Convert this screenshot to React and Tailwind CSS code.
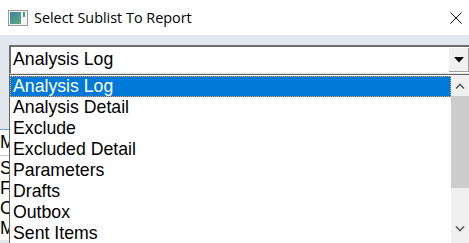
import { useState } from 'react';

const items = [
  'Analysis Log',
  'Analysis Detail',
  'Exclude',
  'Excluded Detail',
  'Parameters',
  'Drafts',
  'Outbox',
  'Sent Items',
];

// window content peeking out left of the open list
const hidden = ['S', 'F', 'C', 'M'];

function WindowIcon() {
  return (
    <svg width="20" height="16" viewBox="0 0 20 16" className="shrink-0">
      <rect x="0.5" y="0.5" width="19" height="15" fill="#f4f4f4" stroke="#9a9a9a" />
      <defs>
        <linearGradient id="pane" x1="0" y1="0" x2="1" y2="1">
          <stop offset="0" stopColor="#3f7fa6" />
          <stop offset="1" stopColor="#5fae7a" />
        </linearGradient>
      </defs>
      <rect x="2" y="2" width="11" height="12" fill="url(#pane)" />
      <rect x="15" y="2" width="2" height="5" fill="#4a9a6a" />
    </svg>
  );
}

export default function App() {
  const [selected] = useState(0);

  return (
    <div
      className="relative w-[469px] h-[243px] overflow-hidden bg-[#e3e8ef]"
      style={{ fontFamily: '"Liberation Sans", Arial, sans-serif' }}
    >
      {/* Title bar */}
      <div className="h-[35px] bg-white flex items-center pl-[8px] pr-[3px]">
        <WindowIcon />
        <span
          className="ml-[6px] text-[14.4px] text-black flex-1"
          style={{ fontFamily: '"Open Sans", "Noto Sans", sans-serif' }}
        >
          Select Sublist To Report
        </span>
        <svg width="12" height="12" viewBox="0 0 12 12" className="mr-[4px]">
          <path d="M0.5 0.5 L11.5 11.5 M11.5 0.5 L0.5 11.5" stroke="#111" strokeWidth="1" />
        </svg>
      </div>

      {/* Combo box */}
      <div className="pt-[10px] pl-[9px]">
        <div className="h-[29px] flex border-t-2 border-l-2 border-t-[#6d6d6d] border-l-[#6d6d6d] border-b border-b-[#e3e3e3] bg-white">
          <div className="flex-1 flex items-center pl-[2px] text-[17.7px] text-black leading-none">
            Analysis Log
          </div>
          <div className="w-[20px] mt-[1px] mb-[1px] flex items-center justify-center bg-[#f0f0f0] border-r border-b border-[#a0a0a0]">
            <svg width="10" height="6" viewBox="0 0 10 6">
              <path d="M0 0 H10 L5 5.5 Z" fill="#000" />
            </svg>
          </div>
        </div>
      </div>

      {/* Window content behind the open list */}
      <div className="h-[55px]" />
      <div className="w-[9px] overflow-hidden border-t border-[#6aa0d8] bg-white">
        <div className="h-[26px] flex items-center text-[17.7px] text-black leading-none border-b border-[#c8c8c8]">
          <span>M</span>
        </div>
        <div className="flex flex-col text-[17.7px] text-black leading-none pt-[4px]">
          {hidden.map((c, i) => (
            <span key={i} className="h-[20px]">{c}</span>
          ))}
        </div>
      </div>

      {/* Dropdown list overlay */}
      <div className="absolute left-[9px] top-[74px] w-[460px] h-[180px] bg-white border-l border-t border-[#646464] flex">
        <div className="flex-1 flex flex-col pt-[1px]">
          {items.map((item, i) => (
            <div
              key={item}
              className={
                i === selected
                  ? 'h-[21px] flex items-center pl-[2px] text-[17.7px] leading-none text-white bg-[#0078d7] border border-dotted border-[#f0a050]'
                  : 'h-[21px] flex items-center pl-[3px] text-[17.7px] leading-none text-black'
              }
            >
              {item}
            </div>
          ))}
        </div>
        {/* Scrollbar */}
        <div className="w-[18px] bg-[#f0f0f0] flex flex-col">
          <div className="h-[21px] flex items-center justify-center">
            <svg width="10" height="6" viewBox="0 0 10 6">
              <path d="M1 5.5 L5 1.5 L9 5.5" stroke="#606060" strokeWidth="1.6" fill="none" />
            </svg>
          </div>
          <div className="h-[92px] bg-[#cdcdcd]" />
          <div className="flex-1" />
          <div className="h-[35px] flex items-start justify-center pt-[7px]">
            <svg width="10" height="6" viewBox="0 0 10 6">
              <path d="M1 0.5 L5 4.5 L9 0.5" stroke="#606060" strokeWidth="1.6" fill="none" />
            </svg>
          </div>
        </div>
      </div>
    </div>
  );
}
